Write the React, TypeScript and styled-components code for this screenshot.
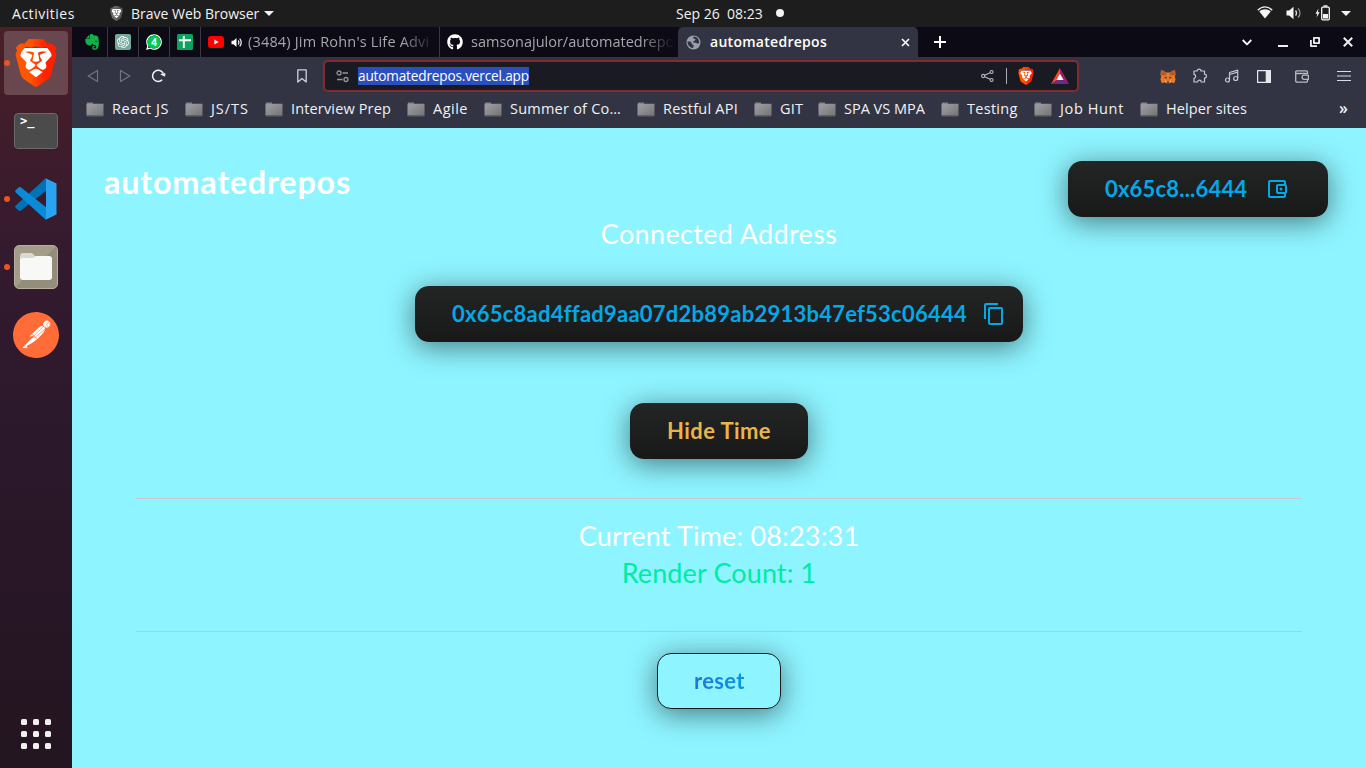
import React from 'react';
import styled, { createGlobalStyle, css } from 'styled-components';
import { SiBrave, SiPostman, SiEvernote, SiOpenai } from 'react-icons/si';
import { FaGithub, FaWhatsapp } from 'react-icons/fa';
import { MdContentCopy, MdOutlineAccountBalanceWallet } from 'react-icons/md';

const uiFont = `'Open Sans', 'Noto Sans', sans-serif`;
const pageFont = `Lato, 'Open Sans', sans-serif`;

const GlobalStyle = createGlobalStyle`
  *, *::before, *::after { box-sizing: border-box; }
  body { margin: 0; overflow: hidden; background: #8ef4ff; }
  svg { display: block; flex: none; }
`;

const Desktop = styled.div`
  display: flex;
  flex-direction: column;
  width: 1366px;
  height: 768px;
  font-family: ${uiFont};
`;

/* ---------- system bar ---------- */
const SystemBar = styled.header`
  display: flex;
  align-items: center;
  height: 27px;
  flex: none;
  background: #1d1d1d;
  color: #f2f2f2;
  font-size: 14px;
  line-height: 27px;
  white-space: pre;
`;
const SystemLeft = styled.div`
  display: flex;
  align-items: center;
  width: 676px;
  padding-left: 12px;
`;
const Activities = styled.span`
  width: 97px;
  letter-spacing: 0.53px;
`;
const AppName = styled.span`
  margin: 0 5px 0 7px;
`;
const Clock = styled.div`
  display: flex;
  align-items: center;
  gap: 13px;
`;
const Dot = styled.i`
  width: 8px;
  height: 8px;
  margin-top: -1px;
  border-radius: 50%;
  background: #f2f2f2;
`;
const Tray = styled.div`
  display: flex;
  align-items: center;
  gap: 12px;
  margin-left: auto;
  padding-right: 15px;
`;
const TrayIcons = styled.div`
  display: flex;
  align-items: center;
  gap: 13px;
  margin: -1px -1px 0 0;
`;
const Caret = styled.i`
  border: 5px solid transparent;
  border-top-color: #f2f2f2;
  border-bottom: 0;
`;

/* ---------- dock ---------- */
const Workspace = styled.div`
  display: flex;
  flex: 1;
  min-height: 0;
`;
const Dock = styled.nav`
  display: flex;
  flex-direction: column;
  gap: 4px;
  width: 72px;
  flex: none;
  padding: 4px 4px 2px;
  background: linear-gradient(#4b2027 0, #3f1c2b 110px, #331a2f 240px, #2c182b 400px, #231520 100%);
`;
const DockTile = styled.div<{ $active?: boolean; $running?: boolean; $last?: boolean }>`
  position: relative;
  display: flex;
  align-items: center;
  justify-content: center;
  width: 64px;
  height: 64px;
  flex: none;
  border-radius: 4px;
  background: ${p => (p.$active ? '#68484e' : 'transparent')};
  ${p => p.$last && css`margin-top: auto;`}
  ${p => p.$running && css`
    &::before {
      content: '';
      position: absolute;
      left: 0;
      top: 29px;
      width: 6px;
      height: 6px;
      border-radius: 50%;
      background: #e95420;
    }
  `}
`;
const TerminalIcon = styled.div`
  width: 44px;
  height: 36px;
  padding: 0 0 0 5px;
  border: 1px solid #6a6a6a;
  border-radius: 4px;
  background: #4b4b4b;
  color: #fff;
  font: bold 12px/14px 'DejaVu Sans Mono', monospace;
`;
const FilesIcon = styled.div`
  display: flex;
  align-items: center;
  justify-content: center;
  width: 44px;
  height: 44px;
  border: 1px solid #b5ae9c;
  border-radius: 5px;
  background: linear-gradient(135deg, #a29c89 0 50%, #938d7b 50%);
`;
const AppGrid = styled.div`
  display: grid;
  grid-template-columns: repeat(3, 6px);
  gap: 6px;
`;
const GridDot = styled.i`
  height: 6px;
  border-radius: 1.5px;
  background: #f0efee;
`;

/* ---------- browser ---------- */
const Browser = styled.main`
  display: flex;
  flex-direction: column;
  flex: 1;
  min-width: 0;
`;
const TabStrip = styled.div`
  display: flex;
  height: 30px;
  flex: none;
  padding-left: 5px;
  background: #0c0a15;
`;
const PinnedTab = styled.div`
  display: flex;
  align-items: center;
  justify-content: center;
  width: 31px;
  border-right: 1px solid #393742;
`;
const Tab = styled.div<{ $w: number; $active?: boolean; $divider?: boolean }>`
  display: flex;
  align-items: center;
  width: ${p => p.$w}px;
  padding: 0 4px 0 7px;
  color: #a7a6ab;
  ${p => p.$divider && css`border-right: 1px solid #393742;`}
  ${p => p.$active && css`
    padding: 0 8px;
    color: #fff;
    background: #323443;
    border-radius: 5px 5px 0 0;
  `}
`;
const TabTitle = styled.span<{ $gap: number; $ls: number; $fade?: boolean; $strong?: boolean }>`
  flex: 1;
  min-width: 0;
  margin-left: ${p => p.$gap}px;
  font-size: ${p => (p.$strong ? 14 : 14.5)}px;
  font-weight: ${p => (p.$strong ? 600 : 400)};
  letter-spacing: ${p => p.$ls}px;
  line-height: 30px;
  white-space: nowrap;
  ${p => p.$fade && css`mask-image: linear-gradient(90deg, #000 calc(100% - 34px), transparent);`}
`;
const WaBubble = styled.div`
  position: relative;
`;
const WaCount = styled.b`
  position: absolute;
  inset: 0;
  color: #fff;
  font-size: 10px;
  line-height: 16px;
  text-align: center;
`;
const WindowButtons = styled.div`
  display: flex;
  align-items: center;
  margin-left: auto;
`;
const Slot = styled.div<{ $w?: number; $ml?: number }>`
  display: flex;
  align-items: center;
  justify-content: center;
  width: ${p => p.$w ?? 32}px;
  flex: none;
  margin-left: ${p => p.$ml ?? 0}px;
`;
const Toolbar = styled.div`
  display: flex;
  align-items: center;
  height: 38px;
  flex: none;
  padding-left: 5px;
  background: #323443;
`;
const AddressBar = styled.div`
  display: flex;
  align-items: center;
  width: 756px;
  height: 32px;
  margin-left: 5px;
  padding: 0 8px 0 11px;
  border: 2px solid #802c30;
  border-radius: 5px;
  background: #191a22;
`;
const SelectedUrl = styled.span`
  margin-left: 9px;
  background: #2b4fbd;
  color: #fff;
  font-size: 13.6px;
  letter-spacing: -0.16px;
  line-height: 18px;
`;
const AddressTools = styled.div`
  display: flex;
  align-items: center;
  margin-left: auto;
`;
const AddressDivider = styled.i`
  width: 1px;
  height: 16px;
  margin: 0 10px 0 12px;
  background: #a9a9af;
`;
const BookmarkBar = styled.div`
  display: flex;
  align-items: center;
  height: 33px;
  flex: none;
  padding: 0 0 5px 14px;
  background: #323443;
  color: #f1f1f3;
`;
const Bookmark = styled.div<{ $w: number; $ls: number }>`
  display: flex;
  align-items: center;
  gap: 8px;
  width: ${p => p.$w}px;
  flex: none;
  font-size: 14.5px;
  letter-spacing: ${p => p.$ls}px;
  line-height: 28px;
  white-space: nowrap;
`;
const More = styled.span`
  margin: -2px 18px 0 auto;
  font-size: 16px;
  font-weight: 600;
`;

/* ---------- web page ---------- */
const Page = styled.section`
  display: flex;
  flex-direction: column;
  align-items: center;
  flex: 1;
  background: #8ef4ff;
  font-family: ${pageFont};
`;
const PageHeader = styled.div`
  display: flex;
  justify-content: space-between;
  align-items: flex-start;
  width: 100%;
  height: 89px;
  padding: 33px 38px 0 32px;
`;
const Title = styled.h1`
  margin: 0;
  color: #fff;
  font-size: 32.5px;
  font-weight: 700;
  letter-spacing: 0.7px;
  line-height: 42px;
`;
const Button = styled.button<{ $w: number; $ls: number; $gap?: number; $color?: string; $outline?: boolean }>`
  display: flex;
  align-items: center;
  gap: ${p => p.$gap ?? 0}px;
  width: ${p => p.$w}px;
  height: 56px;
  flex: none;
  padding: 0 0 1px ${p => (p.$outline ? 36 : 37)}px;
  border: ${p => (p.$outline ? '1px solid #1b1b1b' : '0')};
  border-radius: 14px;
  background: ${p => (p.$outline ? '#8ef4ff' : 'linear-gradient(#232625, #181818)')};
  box-shadow: 0 5px 28px rgba(0, 0, 0, 0.5);
  color: ${p => p.$color ?? '#05a8e6'};
  font: 700 22px ${pageFont};
  letter-spacing: ${p => p.$ls}px;
  white-space: nowrap;
`;
const ButtonLabel = styled.span<{ $gradient?: boolean }>`
  padding-bottom: 1px;
  ${p => p.$gradient && css`
    background: linear-gradient(90deg, #2a6fe0, #0499e6);
    background-clip: text;
    color: transparent;
  `}
`;
const Line = styled.p<{ $h: number; $ls: number; $color?: string }>`
  margin: 0;
  color: ${p => p.$color ?? '#fff'};
  font-size: 27px;
  letter-spacing: ${p => p.$ls}px;
  line-height: ${p => p.$h}px;
`;
const Rule = styled.hr<{ $color: string }>`
  width: 1166px;
  height: 1px;
  flex: none;
  margin: 0;
  border: 0;
  background: ${p => p.$color};
`;
const Spacer = styled.div<{ $h: number }>`
  height: ${p => p.$h}px;
  flex: none;
`;

/* ---------- drawings ---------- */
function BraveLogo({ size, id, from = '#ff5500', to = '#ff2000' }: { size: number; id: string; from?: string; to?: string }) {
  return (
    <svg width={size} height={size} viewBox="0 0 24 24">
      <defs>
        <linearGradient id={id} x1="0" x2="1" y1="0" y2="0">
          <stop offset="0.35" stopColor={from} />
          <stop offset="0.75" stopColor={to} />
        </linearGradient>
      </defs>
      <path d="M5 4.500h14l1 4-3 9-5 4-5-4-3-9z" fill="#fff" />
      <SiBrave size={24} fill={`url(#${id})`} />
    </svg>
  );
}

const VsCodeLogo = () => (
  <svg width="44" height="44" viewBox="0 0 44 44">
    <path d="M32 1 1.800 28.500c-.8.8-.8 1.800 0 2.500l2.700 2.500c.8.6 1.800.7 2.500.1L33 13z" fill="#0072b8" />
    <path d="M32 43 1.800 15.500c-.8-.8-.8-1.800 0-2.500l2.700-2.500c.8-.6 1.800-.7 2.500-.1L33 31z" fill="#0a8bd8" />
    <path d="M32 1.500 42.500 6.500v31L32 42.500z" fill="#2aa3f0" />
  </svg>
);

const FolderGlyph = () => (
  <svg width="36" height="32" viewBox="0 0 36 32">
    <path d="M2 5c0-2 1-3 3-3h9l4 4h12c2 0 3 1 3 3v8H2z" fill="#dcd9d0" />
    <path d="M2 9c0-1 1-2 2-2h11l3-2h13c2 0 3 1 3 3v18c0 2-1 3-3 3H5c-2 0-3-1-3-3z" fill="#f8f8f7" />
  </svg>
);

const SmallFolder = () => (
  <svg width="18" height="15" viewBox="0 0 18 15">
    <defs>
      <linearGradient id="folder" x1="0" x2="1" y1="0" y2="1">
        <stop offset="0.2" stopColor="#98989c" />
        <stop offset="1" stopColor="#737376" />
      </linearGradient>
    </defs>
    <path d="M1 .5h6v2H1z" fill="#808084" />
    <path d="M0.500 1.800h17v11.200a1 1 0 0 1-1 1h-15a1 1 0 0 1-1-1z" fill="url(#folder)" />
    <path d="M0.500 13h17v.6a1 1 0 0 1-1 1h-15a1 1 0 0 1-1-1z" fill="#616164" />
  </svg>
);

const WifiIcon = () => (
  <svg width="16" height="14" viewBox="0 0 16 14">
    <path d="M.8 4.200C5-.2 11-.2 15.200 4.200" fill="none" stroke="#eee" strokeWidth="1.300" />
    <path d="M2.300 5.600C5.500 2.600 10.500 2.600 13.700 5.600L8 12.500z" fill="#f4f4f4" />
  </svg>
);
const VolumeIcon = () => (
  <svg width="16" height="14" viewBox="0 0 16 14">
    <path d="M.5 4.500h2.700L7.500.8v12.400L3.200 9.500H.5z" fill="#f4f4f4" />
    <path d="M9.500 4.400c1.300 1.300 1.300 3.900 0 5.200" stroke="#ddd" fill="none" strokeWidth="1.400" />
    <path d="M12 2.500c2.700 2.400 2.700 6.600 0 9" stroke="#999" fill="none" strokeWidth="1.200" />
  </svg>
);
const BatteryIcon = () => (
  <svg width="15" height="16" viewBox="0 0 15 16">
    <path d="M3.500 3.500.5 8.800h1.800L1.500 12.500 4.700 7.300H2.900z" fill="#f4f4f4" />
    <rect x="6.700" y="2.200" width="7.600" height="12.600" rx="1" fill="none" stroke="#f4f4f4" strokeWidth="1.300" />
    <path d="M8.500.3h4v1.500h-4zM8 9h5v4.500H8z" fill="#f4f4f4" />
  </svg>
);
const SheetIcon = () => (
  <svg width="16" height="16" viewBox="0 0 16 16">
    <rect width="16" height="16" rx="1.500" fill="#0ba35f" />
    <path d="M2 6.300h12M6.800 2v12" stroke="#fff" strokeWidth="1.900" />
  </svg>
);
const GlobeIcon = () => (
  <svg width="15" height="15" viewBox="0 0 15 15">
    <circle cx="7.500" cy="7.500" r="7" fill="#9aa0a8" />
    <path d="M1.600 6.200c1.800.2 3.400.2 3.900 1.300.4 1-.1 1.500.8 2 .9.400 1.700.5 1.300 1.800-.3 1-.4 1.700-1 1.700C3.500 12.500 1.200 9.500 1.600 6.200zM8 1.600c-1.600.8-1 2.200.3 2.200s1.500.9.6 1.600-2 .5-1.900 1.500 2 .5 3 1.100 1.300.4 3.200.2c.2-3.500-2-6.300-5.200-6.600z" fill="#323443" />
  </svg>
);
const MuteIcon = () => (
  <svg width="11" height="11" viewBox="0 0 11 11">
    <path d="M.5 3.700h2L5.500 1v9l-3-2.700h-2z" fill="#fff" />
    <path d="M7.200 3.500c.9 1 .9 3 0 4M8.700 1.600c2 2 2 5.800 0 7.800" fill="none" stroke="#fff" strokeWidth="1.200" />
  </svg>
);
const Stroke = styled.svg<{ $c?: string; $sw?: number }>`
  fill: none;
  stroke: ${p => p.$c ?? '#c6c7ce'};
  stroke-width: ${p => p.$sw ?? 1.2};
  stroke-linejoin: round;
`;
const FoxIcon = () => (
  <svg width="16" height="15" viewBox="0 0 18 16">
    <path d="M1.300.5 7.300 3.500h3.400L16.700.5 17.500 5l-.8 3.500.8 3-1.500 4-3.800-1L11 15.500H7L5.800 14.500l-3.800 1-1.500-4 .8-3L.5 5z" fill="#e8792a" />
    <path d="M1.300.5 7.300 3.500 6.500 7 1.200 6.500zM16.700.5l-6 3L11.500 7l5.300-.5z" fill="#b9582a" />
    <path d="m4.500 9 2.700-.6.500 2zM13.500 9l-2.700-.6-.5 2z" fill="#3a2a30" />
    <path d="M7 13.500h4l-.5 1.500h-3z" fill="#4a3a40" />
    <path d="m5.800 12.500 1.500 1v1.500l-2-1zM12.200 12.500l-1.500 1v1.500l2-1z" fill="#d9cfc8" />
  </svg>
);
const BatIcon = () => (
  <svg width="18" height="16" viewBox="0 0 18 16">
    <path d="M9 0 0 16l9-5.500z" fill="#ff4724" />
    <path d="m9 0 9 16-9-5.500z" fill="#9e1f63" />
    <path d="M0 16h18l-9-5.500z" fill="#662d91" />
    <path d="m9 5.700 3.600 6.300H5.400z" fill="#fff" />
  </svg>
);

const bookmarks: { name: string; width: number; spacing: number }[] = [
  { name: 'React JS', width: 99, spacing: 0.5 },
  { name: 'JS/TS', width: 80, spacing: 0.97 },
  { name: 'Interview Prep', width: 142, spacing: 0.15 },
  { name: 'Agile', width: 77, spacing: 0.5 },
  { name: 'Summer of Co…', width: 153, spacing: 0.23 },
  { name: 'Restful API', width: 117, spacing: 0.25 },
  { name: 'GIT', width: 64, spacing: 0.15 },
  { name: 'SPA VS MPA', width: 123, spacing: 0 },
  { name: 'Testing', width: 93, spacing: 0.28 },
  { name: 'Job Hunt', width: 106, spacing: 0.63 },
  { name: 'Helper sites', width: 110, spacing: 0.08 },
];

export default function App() {
  return (
    <Desktop>
      <GlobalStyle />
      <SystemBar>
        <SystemLeft>
          <Activities>Activities</Activities>
          <BraveLogo size={15} id="brave-gray" from="#6a6a6a" to="#555" />
          <AppName>Brave Web Browser</AppName>
          <Caret />
        </SystemLeft>
        <Clock>
          <span>{'Sep 26  08:23'}</span>
          <Dot />
        </Clock>
        <Tray>
          <TrayIcons>
            <WifiIcon />
            <VolumeIcon />
            <BatteryIcon />
          </TrayIcons>
          <Caret />
        </Tray>
      </SystemBar>

      <Workspace>
        <Dock>
          <DockTile $active $running>
            <BraveLogo size={48} id="brave-dock" />
          </DockTile>
          <DockTile>
            <TerminalIcon>&gt;_</TerminalIcon>
          </DockTile>
          <DockTile $running>
            <VsCodeLogo />
          </DockTile>
          <DockTile $running>
            <FilesIcon>
              <FolderGlyph />
            </FilesIcon>
          </DockTile>
          <DockTile>
            <svg width="46" height="47" viewBox="0 0 24 24.500">
              <circle cx="12" cy="12" r="11" fill="#fff" />
              <SiPostman size={24} color="#ff6c37" />
            </svg>
          </DockTile>
          <DockTile $last>
            <AppGrid>
              {Array.from({ length: 9 }, (_, i) => (
                <GridDot key={i} />
              ))}
            </AppGrid>
          </DockTile>
        </Dock>

        <Browser>
          <TabStrip>
            <PinnedTab>
              <SiEvernote size={16} color="#14b04a" />
            </PinnedTab>
            <PinnedTab>
              <svg width="16" height="16" viewBox="0 0 16 16">
                <rect width="16" height="16" rx="2" fill="#74aa9c" />
                <SiOpenai x="2" y="2" size={12} color="#fff" />
              </svg>
            </PinnedTab>
            <PinnedTab>
              <WaBubble>
                <svg width="16" height="16" viewBox="0 0 16 16">
                  <FaWhatsapp x="-1" y="-1" size={18} color="#fff" />
                  <circle cx="8" cy="8" r="6.600" fill="#00c853" />
                </svg>
                <WaCount>4</WaCount>
              </WaBubble>
            </PinnedTab>
            <PinnedTab>
              <SheetIcon />
            </PinnedTab>
            <Tab $w={239} $divider>
              <svg width="16" height="12" viewBox="0 0 16 12">
                <rect width="16" height="12" rx="3" fill="#f00" />
                <path d="m6.300 3.400 4.400 2.600-4.400 2.600z" fill="#fff" />
              </svg>
              <Slot $w={11} $ml={7}>
                <MuteIcon />
              </Slot>
              <TabTitle $gap={6} $ls={0.18} $fade>(3484) Jim Rohn's Life Advi</TabTitle>
            </Tab>
            <Tab $w={238}>
              <FaGithub size={16} color="#fff" />
              <TabTitle $gap={8} $ls={0} $fade>samsonajulor/automatedrepo</TabTitle>
            </Tab>
            <Tab $w={240} $active>
              <GlobeIcon />
              <TabTitle $gap={9} $ls={0.28} $strong>automatedrepos</TabTitle>
              <Stroke width="9" height="9" viewBox="0 0 9 9" $c="#fff" $sw={1.6}>
                <path d="m1 1 7 7M8 1 1 8" />
              </Stroke>
            </Tab>
            <Slot $w={44}>
              <Stroke width="12" height="12" viewBox="0 0 12 12" $c="#fff" $sw={2}>
                <path d="M6 0v12M0 6h12" />
              </Stroke>
            </Slot>
            <WindowButtons>
              <Slot $w={36}>
                <Stroke width="10" height="7" viewBox="0 0 10 7" $c="#fff" $sw={1.8}>
                  <path d="m.7 1 4.300 4.300L9.300 1" />
                </Stroke>
              </Slot>
              <Slot $w={36}>
                <Stroke width="10" height="10" viewBox="0 0 10 10" $c="#eee" $sw={2}>
                  <path d="M0 9h10" />
                </Stroke>
              </Slot>
              <Slot $w={28}>
                <Stroke width="10" height="10" viewBox="0 0 10 10" $c="#eee" $sw={1.8}>
                  <path d="M3.900.9h5.200v5.200H3.900zM.9 3v6.100H7" />
                </Stroke>
              </Slot>
              <Slot $w={37}>
                <Stroke width="10" height="10" viewBox="0 0 10 10" $c="#eee" $sw={2}>
                  <path d="m.8.8 8.400 8.400M9.200.8.8 9.200" />
                </Stroke>
              </Slot>
            </WindowButtons>
          </TabStrip>

          <Toolbar>
            <Slot>
              <Stroke width="12" height="14" viewBox="0 0 12 14" $c="#73747f">
                <path d="M10.500 1.500v11L1.200 7z" />
              </Stroke>
            </Slot>
            <Slot>
              <Stroke width="12" height="14" viewBox="0 0 12 14" $c="#73747f">
                <path d="M1.500 1.500v11L10.800 7z" />
              </Stroke>
            </Slot>
            <Slot $w={34}>
              <Stroke width="15" height="14" viewBox="0 0 15 14" $c="#f1f1f3" $sw={1.5}>
                <path d="M11.200 10.800A5.600 5.600 0 1 1 12.300 4.500" />
                <path d="m9.800 5.300 4.200-.8-.3 2.700z" fill="#f1f1f3" strokeWidth="0.800" />
              </Stroke>
            </Slot>
            <Slot $ml={111}>
              <Stroke width="10" height="14" viewBox="0 0 10 14" $c="#d0d1d7" $sw={1.3}>
                <path d="M.8.8h8.400v12.200L5 9.600.8 13z" />
              </Stroke>
            </Slot>
            <AddressBar>
              <Stroke width="13" height="13" viewBox="0 0 13 13" $c="#94959c" $sw={1.3}>
                <circle cx="3" cy="3" r="2" />
                <circle cx="10" cy="9.500" r="2" />
                <path d="M6.500 3H12M1 9.500h5.500" />
              </Stroke>
              <SelectedUrl>automatedrepos.vercel.app</SelectedUrl>
              <AddressTools>
                <Stroke width="13" height="12" viewBox="0 0 13 12" $c="#b4b5ba" $sw={1.1}>
                  <circle cx="2.200" cy="6" r="1.600" />
                  <circle cx="10.600" cy="2" r="1.500" />
                  <circle cx="10.600" cy="10" r="1.500" />
                  <path d="m3.600 5.300 5.600-2.600M3.600 6.700l5.600 2.600" />
                </Stroke>
                <AddressDivider />
                <BraveLogo size={18} id="brave-bar" />
                <Slot $w={18} $ml={16}>
                  <BatIcon />
                </Slot>
              </AddressTools>
            </AddressBar>
            <Slot $ml={73}>
              <FoxIcon />
            </Slot>
            <Slot>
              <Stroke width="16" height="16" viewBox="0 0 16 16">
                <path d="M2 3h3.200a1.900 1.900 0 1 1 3.800 0h3.500v3.300c2.600-.4 2.600 4 0 3.700V14H9.200c0-2.400-3.600-2.400-3.600 0H2v-3.600c2.300-.4 2.300-3.800 0-4z" />
              </Stroke>
            </Slot>
            <Slot>
              <Stroke width="16" height="16" viewBox="0 0 16 16">
                <circle cx="3.500" cy="12" r="2" />
                <circle cx="11.700" cy="10.500" r="2" />
                <path d="M5.500 12V4.500l8.200-2.300v8.300M5.500 6.500l8.200-2.300" />
              </Stroke>
            </Slot>
            <Slot>
              <Stroke width="14" height="13" viewBox="0 0 14 13" $c="#e8e8ec">
                <path d="M.6.600h12.800v11.800H.6z" />
                <path d="M9.300.6h4v11.800h-4z" fill="#e8e8ec" />
              </Stroke>
            </Slot>
            <Slot $ml={6}>
              <Stroke width="14" height="13" viewBox="0 0 14 13" $c="#b9bac1" $sw={1.3}>
                <path d="M12.500 4V2.200a1.300 1.300 0 0 0-1.300-1.400H2A1.300 1.300 0 0 0 .7 2.200v8.600A1.300 1.300 0 0 0 2 12.200h9.200a1.300 1.300 0 0 0 1.300-1.400V10M.7 3.500h11.800" />
                <path d="M13.400 5.200v4.200H9.200a2.100 2.100 0 0 1 0-4.200z" />
              </Stroke>
            </Slot>
            <Slot $ml={10}>
              <Stroke width="14" height="12" viewBox="0 0 14 12" $c="#dcdde2" $sw={1.2}>
                <path d="M0 1.500h14M0 6h14M0 10.500h14" />
              </Stroke>
            </Slot>
          </Toolbar>

          <BookmarkBar>
            {bookmarks.map(b => (
              <Bookmark key={b.name} $w={b.width} $ls={b.spacing}>
                <SmallFolder />
                {b.name}
              </Bookmark>
            ))}
            <More>»</More>
          </BookmarkBar>

          <Page>
            <PageHeader>
              <Title>automatedrepos</Title>
              <Button $w={260} $ls={0.19} $gap={18}>
                <ButtonLabel>0x65c8...6444</ButtonLabel>
                <MdOutlineAccountBalanceWallet size={24} />
              </Button>
            </PageHeader>
            <Line $h={34} $ls={0.35}>Connected Address</Line>
            <Spacer $h={35} />
            <Button $w={608} $ls={0.24} $gap={15}>
              <ButtonLabel>0x65c8ad4ffad9aa07d2b89ab2913b47ef53c06444</ButtonLabel>
              <MdContentCopy size={24} />
            </Button>
            <Spacer $h={61} />
            <Button $w={178} $ls={0.42} $color="#e8b44d">
              <ButtonLabel>Hide Time</ButtonLabel>
            </Button>
            <Spacer $h={39} />
            <Rule $color="#c8c9ca" />
            <Spacer $h={18} />
            <Line $h={37} $ls={0.17}>Current Time: 08:23:31</Line>
            <Line $h={37} $ls={0.12} $color="#00eba6">Render Count: 1</Line>
            <Spacer $h={40} />
            <Rule $color="#a6cfd6" />
            <Spacer $h={21} />
            <Button $w={124} $ls={0.35} $outline>
              <ButtonLabel $gradient>reset</ButtonLabel>
            </Button>
          </Page>
        </Browser>
      </Workspace>
    </Desktop>
  );
}
